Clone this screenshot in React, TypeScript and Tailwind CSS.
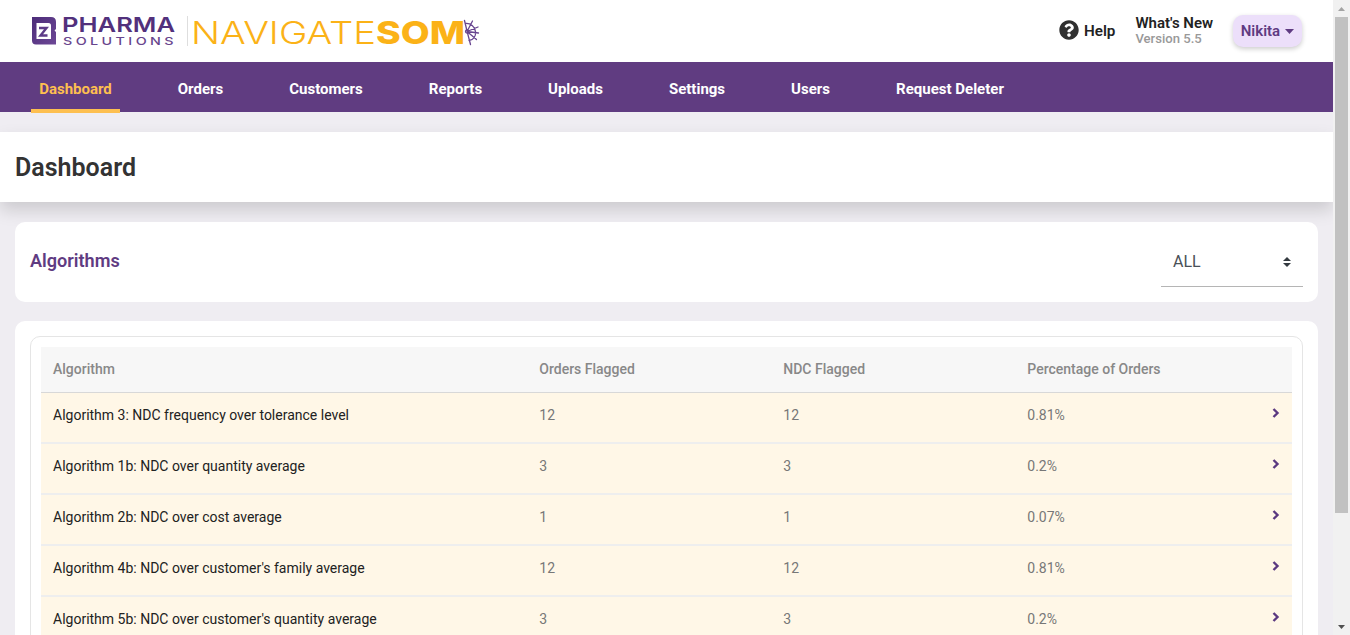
import React from "react";

const nav: [string, string][] = [
  ["Dashboard", "w-[89px]"],
  ["Orders", "w-[61px]"],
  ["Customers", "w-[90px]"],
  ["Reports", "w-[69px]"],
  ["Uploads", "w-[71px]"],
  ["Settings", "w-[72px]"],
  ["Users", "w-[55px]"],
  ["Request Deleter", "w-[124px]"],
];

const rows: [string, string, string, string][] = [
  ["Algorithm 3: NDC frequency over tolerance level", "12", "12", "0.81%"],
  ["Algorithm 1b: NDC over quantity average", "3", "3", "0.2%"],
  ["Algorithm 2b: NDC over cost average", "1", "1", "0.07%"],
  ["Algorithm 4b: NDC over customer's family average", "12", "12", "0.81%"],
  ["Algorithm 5b: NDC over customer's quantity average", "3", "3", "0.2%"],
];

function Logo() {
  return (
    <svg className="h-[38px] w-[456px] shrink-0" viewBox="28 12 456 38" role="img">
      <defs>
        <linearGradient id="mark" x1="0" y1="0" x2="1" y2="1">
          <stop offset="0" stopColor="#4c2c79" />
          <stop offset="1" stopColor="#6d4896" />
        </linearGradient>
      </defs>
      <path d="M32 17h19q5 0 5 5v7l-1.500 1.500L56 32v12.500h-20q-4 0-4-4z" fill="url(#mark)" />
      <path d="M36.500 23h12q2.500 0 2.500 2.500v13.500h-14.500z" fill="#fff" />
      <path d="M39 28h7.500l-6 7.500h7" stroke="#5d3b87" strokeWidth="2.400" fill="none" />
      <text x="62" y="32" textLength="113" lengthAdjust="spacingAndGlyphs" fontFamily="Inter, sans-serif" fontWeight="600" fontSize="20" fill="#52307c">PHARMA</text>
      <text x="63" y="45" textLength="114" lengthAdjust="spacingAndGlyphs" fontFamily="Inter, sans-serif" fontWeight="500" fontSize="10.500" letterSpacing="2.500" fill="#68458d">SOLUTIONS</text>
      <path d="M187.500 16v30" stroke="#dedede" />
      <text x="191" y="43.500" textLength="185" lengthAdjust="spacingAndGlyphs" fontFamily="Inter, sans-serif" fontWeight="300" fontSize="31" fill="#fbb217">NAVIGATE</text>
      <text x="376" y="43.500" textLength="89" lengthAdjust="spacingAndGlyphs" fontFamily="Inter, sans-serif" fontWeight="800" fontSize="31" fill="#fbb217">SOM</text>
      <g stroke="#684590" fill="none" strokeWidth="1.300" strokeLinecap="round">
        <path d="M464.500 20.500 467 31l3.500 13.500M465.500 23.500c5-.5 9.500 3 10 8s-2 8.500-6.500 9M467 31.500l5.500-10.500M467 31.500l11-4.500M467 31.500l11.500 1.500M467 31.500l9.500 8" />
        <circle cx="467" cy="31.500" r="1.500" />
      </g>
    </svg>
  );
}

export default function App() {
  return (
    <div className="flex h-[635px] w-[1350px] overflow-hidden bg-[#efedf2] font-['Roboto',sans-serif]">
      <div className="flex w-[1333px] shrink-0 flex-col overflow-hidden">
        <header className="flex h-[62px] shrink-0 items-center bg-white pl-7">
          <Logo />
          <div className="ml-[575px] flex items-center gap-[5px] text-[#222]">
            <svg className="mb-0.5 size-5" viewBox="0 0 512 512" fill="#303030">
              <path d="M504 256c0 136.997-111.043 248-248 248S8 392.997 8 256C8 119.083 119.043 8 256 8s248 111.083 248 248zM262.655 90c-54.497 0-89.255 22.957-116.549 63.758-3.536 5.286-2.353 12.415 2.715 16.258l34.699 26.310c5.205 3.947 12.621 3.008 16.665-2.122 17.864-22.658 30.113-35.797 57.303-35.797 20.429 0 45.698 13.148 45.698 32.958 0 14.976-12.363 22.667-32.534 33.976C247.128 238.528 216 254.941 216 296v4c0 6.627 5.373 12 12 12h56c6.627 0 12-5.373 12-12v-1.333c0-28.462 83.186-29.647 83.186-106.667 0-58.002-60.165-102-116.531-102zM256 338c-25.365 0-46 20.635-46 46 0 25.364 20.635 46 46 46s46-20.636 46-46c0-25.365-20.635-46-46-46z" />
            </svg>
            <span className="text-[15.200px] font-semibold">Help</span>
          </div>
          <div className="ml-5 w-[97.500px]">
            <div className="text-[15px] leading-4 font-semibold text-[#222]">What's New</div>
            <div className="text-[13.100px] leading-4 font-medium text-[#999]">Version 5.5</div>
          </div>
          <button className="flex h-8 w-[69px] items-center justify-center gap-[5px] rounded-[10px] bg-[#ecdffa] text-[15px] font-semibold text-[#5f3b82] shadow-[0_2px_5px_rgba(0,0,0,0.2)]">
            Nikita
            <svg className="h-[5px] w-[9px]" viewBox="0 0 9 5"><path d="M0 0h9L4.500 5z" fill="#5f3b82" /></svg>
          </button>
        </header>
        <nav className="flex h-[50px] shrink-0 gap-[50px] bg-[#603c81] pl-[31px]">
          {nav.map(([label, width], i) => (
            <a key={label} className={`${width} flex shrink-0 items-center justify-center text-[15px] font-bold whitespace-nowrap ${i === 0 ? "h-[51px] border-b-4 border-[#fdbf50] pt-[7px] text-[#fdbf50]" : "h-[50px] pt-1 text-white"}`}>
              {label}
            </a>
          ))}
        </nav>
        <div className="mt-5 flex h-[70px] shrink-0 items-center bg-white pt-0.5 pl-[15px] shadow-[0_8px_16px_rgba(0,0,0,0.15)]">
          <h1 className="text-[25px] font-semibold text-[#333]">Dashboard</h1>
        </div>
        <section className="mt-5 mr-[15px] ml-[15px] flex h-20 shrink-0 items-center justify-between rounded-[10px] bg-white px-[15px]">
          <h2 className="pb-[3px] text-[18.100px] font-semibold text-[#5f3b82]">Algorithms</h2>
          <div className="flex h-[50px] w-[142px] items-center justify-between border-b border-[#b5b5b5] pr-3 pl-3 text-base text-[#495057]">
            ALL
            <svg className="h-[10px] w-2" viewBox="0 0 8 10" fill="#343a40"><path d="M0 4 4 0l4 4zM0 6h8L4 10z" /></svg>
          </div>
        </section>
        <section className="mx-[15px] mt-[19px] h-[500px] shrink-0 rounded-[10px] bg-white p-[15px]">
          <div className="h-[480px] rounded-[10px] border border-[#e5e5e5] p-[10px]">
            <div className="grid h-[46px] grid-cols-[486.300px_244px_244px_1fr] items-center border-b border-[#d8d8d8] bg-[#f7f7f7] pb-0.5 pl-3 text-sm font-medium text-[#888]">
              <div>Algorithm</div><div>Orders Flagged</div><div>NDC Flagged</div><div>Percentage of Orders</div>
            </div>
            {rows.map(([name, orders, ndc, percent]) => (
              <div key={name} className="grid h-[51px] grid-cols-[486.300px_244px_244px_1fr_24px] border-b-2 border-[#eee] bg-[#fff7e7] pt-3 pl-3 text-sm text-[#777]">
                <div className="text-[#222]">{name}</div><div>{orders}</div><div>{ndc}</div><div>{percent}</div>
                <svg className="mt-[3px] ml-1 h-[10px] w-[9px]" viewBox="0 0 9 10"><path d="m1.500 1 4 4-4 4" fill="none" stroke="#5b3980" strokeWidth="2.400" /></svg>
              </div>
            ))}
          </div>
        </section>
      </div>
      <div className="flex w-[17px] shrink-0 flex-col items-center bg-[#f1f1f1]">
        <div className="flex h-[17px] items-center"><svg className="h-1 w-[7px]" viewBox="0 0 7 4"><path d="M0 4h7L3.500 0z" fill="#a3a3a3" /></svg></div>
        <div className="h-[496px] w-[13px] bg-[#c1c1c1]" />
        <div className="mt-auto flex h-[17px] items-center"><svg className="h-1 w-[7px]" viewBox="0 0 7 4"><path d="M0 0h7L3.500 4z" fill="#505050" /></svg></div>
      </div>
    </div>
  );
}
